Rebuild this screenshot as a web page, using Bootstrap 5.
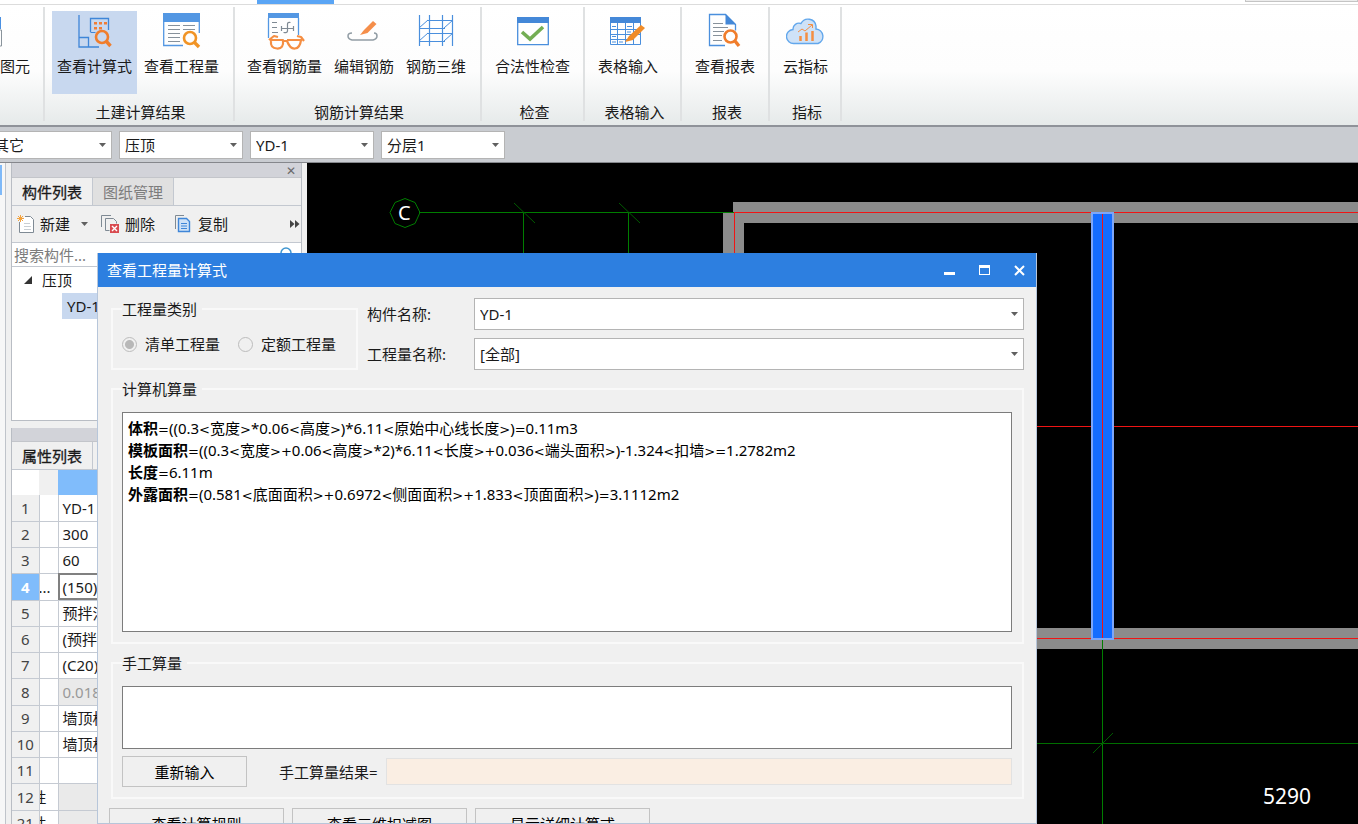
<!DOCTYPE html>
<html lang="zh-CN">
<head>
<meta charset="utf-8">
<meta name="viewport" content="width=device-width, initial-scale=1">
<title>查看工程量计算式</title>
<link href="https://cdn.jsdelivr.net/npm/bootstrap@5.3.0/dist/css/bootstrap.min.css" rel="stylesheet">
<style>
  body { font: 15px/20px "Noto Sans", "Noto Sans CJK SC", sans-serif; color: #1a1a1a; background: #f0f0f0; }
  svg { display: block; flex: none; }

  /* ribbon */
  .ribbon-tabs { height: 5px; flex: none; border-bottom: 1px solid #dcdcdc; background: #fff; }
  .active-tab { width: 77px; height: 4px; margin-left: 257px; background: #5aa5f5; }
  .corner-box { width: 113px; height: 2px; background: #ececec; border: 1px solid #c4c4c4; border-top: 0; }
  .ribbon { height: 120px; flex: none; background: linear-gradient(#fff 0%, #fdfdfd 55%, #e6eaea 100%); overflow: hidden; }
  .ribbon-group { padding: 6px 0 0 8px; margin: 0; position: relative; flex: none; }
  .ribbon-group::after { content: ""; position: absolute; right: 0; top: 2px; bottom: 4px; width: 2px; background: #dfe1e2; }
  .ribbon-group .tools { gap: 2px; }
  .ribbon-group .tool { width: 85px; height: 83px; padding: 1px 0 0; border: 0; border-radius: 0; font-size: 15px; line-height: 20px; color: #1a1a1a; display: flex; flex-direction: column; align-items: center; white-space: nowrap; gap: 4px; }
  .ribbon-group .tool.w4 { width: 70px; }
  .ribbon-group .tool.w3 { width: 55px; }
  .ribbon-group .tool.active { background: #c8d8ef; }
  .group-title { margin: 8px 0 0 -6px; text-align: center; }
  .g-pick { width: 45px; padding-left: 0; }
  .g-pick .tool { width: 30px !important; overflow: hidden; align-items: flex-start !important; }
  .g-civil { width: 190px; padding-left: 7px; } .g-rebar { width: 247px; padding-left: 7px; } .g-check { width: 103px; }
  .g-table { width: 97px; } .g-report { width: 88px; } .g-index { width: 72px; }

  /* drop-downs */
  .combo { border: 1px solid #b4b4b4; border-radius: 0; font-size: 15px; line-height: 20px; color: #1a1a1a; padding: 0 20px 0 5px; height: 28px; background: #fff url("data:image/svg+xml,%3Csvg xmlns='http://www.w3.org/2000/svg' width='7' height='4'%3E%3Cpath d='M0 0h7L3.500 4z' fill='%23606060'/%3E%3C/svg%3E") no-repeat right 5px center / 7px 4px; }
  .context-bar { height: 38px; flex: none; background: #c9ccd1; border-top: 2px solid #8f9299; border-bottom: 1px solid #85878c; padding-top: 4px; overflow: hidden; gap: 7px; }
  .context-bar .combo { width: 124px; flex: none; }
  .context-bar .combo:first-child { margin-left: -12px; }

  /* docks */
  .workspace { min-height: 0; overflow: hidden; }
  .side-strip { width: 6px; border-right: 1px solid #c0c4ca; background: #f7f7f7; }
  .side-strip span { display: block; width: 2px; height: 30px; background: #7fb9f8; margin-top: 2px; }
  .docks { width: 291px; margin: 0 5px; overflow: hidden; }
  .dock { border: 1px solid #b9bdc4; border-top: 0; background: #fff; }
  .dock-head { height: 15px; background: #d2d3d9; border-bottom: 1px solid #c3c5ca; }
  .dock-head .closer { font: 12px/12px "DejaVu Sans", sans-serif; border: 0; padding: 2px 5px 0; background: none; color: #6a6a6a; }
  .dock-tabs { height: 28px; background: #f0f0f0; border-bottom: 1px solid #c3c8d0; }
  .dock-tabs button { border: 0; border-right: 1px solid #c3c8d0; background: #f0f0f0; color: #1a1a1a; width: 81px; padding: 0; }
  .dock-tabs .idle { background: #e0e0e0; color: #7c7c7c; }
  .dock-tabs .on { -webkit-text-stroke: .3px; }
  .dock-tools { height: 37px; background: #f0f0f0; border-bottom: 1px solid #c3c8d0; padding: 0 1px 0 5px; }
  .dock-tools button { border: 0; background: none; padding: 0; display: flex; align-items: center; gap: 6px; color: #1a1a1a; }
  .dock-tools .act-del { margin: 0 20px 0 12px; }
  .finder { height: 24px; border-bottom: 1px solid #c3c8d0; }
  .finder input { border: 0; padding: 0 2px; font-size: 15px; line-height: 20px; border-radius: 0; height: 23px; }
  .finder input::placeholder { color: #7c7c7c; }
  .tree { height: 153px; }
  .tree li { height: 26px; line-height: 26px; }
  .tree .picked { background: #c8d8ef; margin-left: 50px; padding-left: 5px; }
  .props { margin-top: 7px; }
  .props .dock-head { height: 14px; }
  .grid { width: 100%; table-layout: fixed; border-collapse: collapse; }
  .grid th, .grid td { height: 26px; padding: 0 4px; border: 1px solid #c5cad2; border-width: 0 1px 1px 0; white-space: nowrap; overflow: hidden; font-weight: 400; }
  .grid tr:nth-child(4n) > * { height: 27px; }
  .grid tbody th { background: #f0f0f0; text-align: center; padding: 0; color: #444; }
  .grid thead th { border: 0; height: 25px; }
  .grid thead th:nth-child(2) { background: #f0f0f0; }
  .grid thead th:nth-child(3) { background: #80bcfb; }
  .grid .num { width: 27px; } .grid .flag { width: 19px; }
  .grid td:nth-child(2) { padding: 0; text-indent: -1px; }
  .grid td.cut { text-indent: -8px; }
  .grid .now th { background: #80bcfb; color: #fff; font-weight: 700; }
  .grid .now td:last-child { outline: 2px solid #808080; outline-offset: -2px; }
  .grid .off { background: #eaeaea; color: #999; }

  /* drawing canvas */
  .canvas { background: #000; min-width: 0; }
  .canvas text { fill: #fff; font-family: "Noto Sans", sans-serif; }

  /* floating window */
  .calc { position: absolute; left: 97px; top: 253px; bottom: 0; width: 940px; max-width: calc(100% - 97px); background: #f0f0f0; border: 1px solid #b7c6da; border-top: 0; overflow: hidden; }
  .calc-title { height: 34px; margin: 0 -1px; padding: 0 12px 0 10px; background: #2d7fe0; color: #fff; }
  .calc-title button { border: 0; background: none; padding: 0; }
  .calc-body { padding: 11px 12px 0 13px; }
  .calc .frame { border: 2px solid #f9f9f9; padding: 0 10px 10px 9px; min-width: 0; margin: 0; }
  .calc .frame + .frame, .calc .d-flex + .frame { margin-top: 8px; }
  .calc legend { float: none; width: auto; font-size: 15px; line-height: 22px; margin: 0; padding: 0 5px 0 0; color: #1a1a1a; }
  .kinds { width: 247px; height: 72px; flex: none; }
  .kinds .choices { display: flex; gap: 18px; padding-top: 14px; }
  .kinds .choice { display: flex; align-items: center; gap: 8px; white-space: nowrap; }
  .kinds .form-check-input { width: 15px; height: 15px; margin: 0; border: 1px solid #bcbcbc; background: #f0f0f0; opacity: 1; }
  .kinds .form-check-input:checked { background: radial-gradient(circle, #b8b8b8 0 4px, #f0f0f0 5px); }
  .kinds label { opacity: 1 !important; color: #1a1a1a; }
  .pickers { display: grid; grid-template-columns: 107px 1fr; row-gap: 8px; align-items: center; padding-left: 9px; }
  .pickers .combo { height: 32px; width: 100%; }
  .sheet { border: 1px solid #7c7c7c; border-radius: 0; background: #fff; margin-top: 12px; width: 100%; display: block; resize: none; }
  .manual { height: 63px; }
  .formulas { height: 220px; padding: 5px; line-height: 21px; color: #000; white-space: nowrap; overflow: hidden; }
  .formulas b { font-weight: 700; }
  .formulas i { font: 13px/20px "DejaVu Sans", sans-serif; }
  .manual-row { margin-top: 7px; }
  .push { border: 1px solid #c3c3c3; border-radius: 0; background: #f0f0f0; height: 31px; padding: 0; font-size: 15px; color: #000; line-height: 20px; width: 125px; }
  .push.more { width: 175px; }
  .more-row { margin: 9px 0 0 -2px; gap: 8px; }
  .result { background: #faeee3; border: 1px solid #e2e2e2; height: 27px; border-radius: 0; }
</style>
</head>
<body class="vh-100 overflow-hidden d-flex flex-column position-relative">

<div class="ribbon-tabs d-flex justify-content-between"><div class="active-tab"></div><div class="corner-box"></div></div>

<div class="ribbon d-flex" role="toolbar" aria-label="工程量">
  <section class="ribbon-group g-pick">
    <button class="btn tool"><svg width="30" height="40"><path d="M0 5h1v12H0z" fill="#4a90e2"/><path d="M0 18h1.500v16H0" fill="none" stroke="#8a949c"/></svg>图元</button>
  </section>
  <section class="ribbon-group g-civil">
    <div class="tools d-flex">
      <button class="btn tool active"><svg width="40" height="40" fill="none"><path d="M4 3v32h20M4 25.500h9.500V35M15.500 20V6.500h18V18" stroke="#3f86d8" stroke-width="1.300"/><path d="M15.500 20.500h5" stroke="#3f86d8"/><path d="M19 10h3v2.500h-3zM24 10h3v2.500h-3zM29 10h3v2.500h-3zM19 15h3v2.500h-3zM24 15h3v2.500h-3z" fill="#f07d36"/><circle cx="27" cy="25" r="6" stroke="#f07d2c" stroke-width="2.600"/><path d="m31 29 4.500 5" stroke="#f07d2c" stroke-width="3.400"/></svg>查看计算式</button>
      <button class="btn tool"><svg width="40" height="40" fill="none"><path d="M1 1h37v9H1z" fill="#5397e3"/><path d="M1.700 9v24.500H21M37.300 9v12" stroke="#5397e3" stroke-width="1.300"/><path d="M6 13.500h12M6 17.500h12M6 21.500h12M6 25.500h12M6 29.500h12M21 13.500h12M21 17.500h12" stroke="#87919b"/><circle cx="28" cy="26" r="6" stroke="#f19426" stroke-width="2.600"/><path d="m32 30 5 5" stroke="#f19426" stroke-width="3.400"/></svg>查看工程量</button>
    </div>
    <div class="group-title">土建计算结果</div>
  </section>
  <section class="ribbon-group g-rebar">
    <div class="tools d-flex">
      <button class="btn tool"><svg width="40" height="40" fill="none"><path d="M3 1h31v5H3z" fill="#5397e3"/><path d="M3.500 6v20M33.500 6v17" stroke="#5397e3" stroke-width="1.300"/><path d="M7 10.500h5M7 15.500h5M7 20.500h6M16 16.500h13M28.500 14v5M22.500 16v-4q0-2 3-1.500M22.500 16v3q0 2-4 1.500M16.500 14v5" stroke="#7f8a94" stroke-width="1.200"/><path d="M4 28 9 24l4 1M32 24l4 1 3 4M5 28h13q1 9-6 8.500T6 29M22 28h14q-1 8-6 8.500T22 29M18 29h4" stroke="#f58e42" stroke-width="2.200" stroke-linejoin="round"/></svg>查看钢筋量</button>
      <button class="btn tool w4"><svg width="40" height="40" fill="none"><path d="M8 21q-4 0-4 3t4 4h21q4-1 4-4t-3-3" stroke="#929da5" stroke-width="1.500"/><path d="m20 18 9-9 3.500 3-9 9-7.500 2z" fill="#f58e4a"/></svg>编辑钢筋</button>
      <button class="btn tool w4"><svg width="40" height="40" fill="none" stroke="#4a8fdd"><path d="M3.500 3v31M13.500 3v31M26.500 3v31M36.500 3v31M11 8.500h26M3 16.500h26M11 21.500h26M3 29.500h26" stroke-width="1.200"/><path d="m3 16 9-8M28 16l9-8M3 29l9-8M28 29l9-8" stroke-width="1"/></svg>钢筋三维</button>
    </div>
    <div class="group-title">钢筋计算结果</div>
  </section>
  <section class="ribbon-group g-check">
    <button class="btn tool"><svg width="40" height="40" fill="none"><path d="M4.700 5.700h30.600v27H4.700z" fill="#fff" stroke="#4a8fdd" stroke-width="1.300"/><path d="M4 5h32v6H4z" fill="#4488d8"/><path d="m9 20 8 7 13-12" stroke="#74ae54" stroke-width="3.600"/></svg>合法性检查</button>
    <div class="group-title">检查</div>
  </section>
  <section class="ribbon-group g-table">
    <button class="btn tool w4"><svg width="40" height="40" fill="none"><path d="M2.500 5.500h30v27h-30zM2 17.500h30M2 22.500h30M2 27.500h22M9.500 11v22M17.500 11v22M25.500 11v22" stroke="#4a8fdd"/><path d="M2 5h31v6H2z" fill="#4488d8"/><path d="M4 14.500h4M19 14.500h5M4 24.500h4M4 30h4M11 30h4M19 20h4" stroke="#4a8fdd"/><path d="m21 24 12-11 4 3-12 12-8 2z" fill="#f08c28"/></svg>表格输入</button>
    <div class="group-title">表格输入</div>
  </section>
  <section class="ribbon-group g-report">
    <button class="btn tool w4"><svg width="40" height="40" fill="none"><path d="M20 33.500H4.500v-31h16l10 10v6" stroke="#4a8fdd" stroke-width="1.300"/><path d="M20.500 2v10.500H31z" fill="#4488d8"/><path d="M8 11.500h10M8 15.500h15M8 19.500h11M8 23.500h9M8 28.500h9" stroke="#87919b"/><circle cx="25.500" cy="24.500" r="6" stroke="#f07d2c" stroke-width="2.600"/><path d="m30 29 4 5" stroke="#f07d2c" stroke-width="3.400"/></svg>查看报表</button>
    <div class="group-title">报表</div>
  </section>
  <section class="ribbon-group g-index">
    <button class="btn tool w3"><svg width="40" height="40" fill="none"><path d="M8 31.500a7 7 0 0 1-1-14 6 6 0 0 1 8-6 8 8 0 0 1 15 2.500v3a7.500 7.500 0 0 1 2 14.500z" fill="#cfe2f7" stroke="#62a7ec" stroke-width="1.400"/><path d="M14.500 24v5M20.500 20.500V29M26.500 19v10" stroke="#f58e42" stroke-width="2.500"/><path d="m12 20 4-3 3 2 7-6M22 12.500h4.500V16" stroke="#f58e42"/></svg>云指标</button>
    <div class="group-title">指标</div>
  </section>
</div>

<div class="context-bar d-flex">
  <select class="combo form-select" aria-label="构件类别"><option>其它</option></select>
  <select class="combo form-select" aria-label="构件类型"><option>压顶</option></select>
  <select class="combo form-select" aria-label="构件"><option>YD-1</option></select>
  <select class="combo form-select" aria-label="分层"><option>分层1</option></select>
</div>

<main class="workspace d-flex flex-fill">
  <div class="side-strip"><span></span></div>
  <div class="docks flex-shrink-0">
    <section class="dock">
      <div class="dock-head d-flex justify-content-end"><button class="closer" aria-label="关闭">✕</button></div>
      <div class="dock-tabs d-flex"><button class="on">构件列表</button><button class="idle">图纸管理</button></div>
      <div class="dock-tools d-flex align-items-center justify-content-between">
        <div class="d-flex align-items-center">
          <button><svg width="17" height="18" fill="none"><path d="M2.500 7v10.500h14V4.500l-3-3H8" fill="#fff" stroke="#7f8a94"/><path d="M7 8.500h6M7 11.500h7M7 14.500h7" stroke="#c9ced3"/><path d="M3.500 0v7M0 3.500h7M1 1l5 5M6 1 1 6" stroke="#f4a23c"/></svg>新建<svg width="9" height="5" class="ms-1"><path d="M1 0h7L4.500 4z" fill="#606060"/></svg></button>
          <button class="act-del"><svg width="18" height="18" fill="none"><path d="M.5 12V.5H10M4.500 15.500h4M4.500 15.500v-12h8l3 3v2" stroke="#7f8a94"/><path d="M9 9h9v9H9z" fill="#d94b50"/><path d="m11 11 5 5M16 11l-5 5" stroke="#fff" stroke-width="1.400"/></svg>删除</button>
          <button><svg width="17" height="18" fill="none"><path d="M.5 14V.5H9" stroke="#7f8a94"/><path d="M3.500 3.500h8l3 3v10h-11z" fill="#cfe2f7" stroke="#3f86d8" stroke-width="1.400"/><path d="M6 8.500h6M6 11h6M6 13.500h6" stroke="#3f86d8"/></svg>复制</button>
        </div>
        <button aria-label="更多"><svg width="10" height="8"><path d="m0 0 4.500 4L0 8zM5 0l4.500 4L5 8z" fill="#444"/></svg></button>
      </div>
      <div class="finder d-flex"><input class="form-control shadow-none" placeholder="搜索构件..." aria-label="搜索构件"><svg width="24" height="20" fill="none"><circle cx="9" cy="10" r="5" stroke="#3f95d0" stroke-width="1.500"/></svg></div>
      <ul class="tree list-unstyled mb-0">
        <li class="d-flex align-items-center"><svg width="30" height="10"><path d="M20 1v8h-8z" fill="#333"/></svg>压顶</li>
        <li class="picked">YD-1</li>
      </ul>
    </section>
    <section class="dock props">
      <div class="dock-head"></div>
      <div class="dock-tabs d-flex"><button class="on">属性列表</button></div>
      <table class="grid">
        <colgroup><col class="num"><col class="flag"><col></colgroup>
        <thead><tr><th></th><th></th><th></th></tr></thead>
        <tbody>
          <tr><th>1</th><td></td><td>YD-1</td></tr>
          <tr><th>2</th><td></td><td>300</td></tr>
          <tr><th>3</th><td></td><td>60</td></tr>
          <tr class="now"><th>4</th><td>...</td><td>(150)</td></tr>
          <tr><th>5</th><td></td><td>预拌混凝土</td></tr>
          <tr><th>6</th><td></td><td>(预拌混凝土)</td></tr>
          <tr><th>7</th><td></td><td>(C20)</td></tr>
          <tr><th>8</th><td></td><td class="off">0.018</td></tr>
          <tr><th>9</th><td></td><td>墙顶标高</td></tr>
          <tr><th>10</th><td></td><td>墙顶标高</td></tr>
          <tr><th>11</th><td></td><td></td></tr>
          <tr><th>12</th><td class="cut">性</td><td class="off"></td></tr>
          <tr><th>21</th><td class="cut">性</td><td class="off"></td></tr>
        </tbody>
      </table>
    </section>
  </div>

  <div class="canvas flex-fill">
    <svg width="100%" height="100%" fill="none" role="img" aria-label="平面图">
      <g fill="#8b8b8b"><rect x="426" y="39" width="100%" height="21"/><rect x="416" y="50" width="21" height="437"/><rect x="416" y="465" width="100%" height="21"/></g>
      <rect x="437" y="60" width="100%" height="405" fill="#000"/>
      <g fill="#007d00"><rect x="112" y="49" width="315" height="1"/><rect x="216" y="49" width="1" height="300"/><rect x="321" y="49" width="1" height="300"/></g>
      <path d="m207 40 21 20M312 40l21 20" stroke="#005a00"/>
      <path d="m98 35.500 10 4 5 10-5 11-10 4-10-4-5-11 5-10z" stroke="#007d00"/>
      <text x="91" y="57" font-size="20">C</text>
      <g fill="#f01414"><rect x="427" y="49" width="100%" height="1"/><rect x="427" y="49" width="1" height="426"/><rect x="427" y="475" width="100%" height="1"/><rect x="427" y="263" width="100%" height="1"/></g>
      <rect x="0" y="580" width="100%" height="1" fill="#006e00"/>
      <rect x="785" y="50" width="21" height="426" fill="#146cff" stroke="#7ea6f8" stroke-width="2"/>
      <rect x="795" y="51" width="1" height="424" fill="#f01414"/>
      <rect x="795" y="477" width="1" height="100%" fill="#007d00"/><path d="m786 590 20-20" stroke="#005a00"/>
      <text x="956" y="641" font-size="21">5290</text>
    </svg>
  </div>
</main>

<div class="calc" role="dialog" aria-labelledby="calc-name">
  <div class="calc-title d-flex align-items-center justify-content-between">
    <span id="calc-name">查看工程量计算式</span>
    <div class="d-flex gap-4">
      <button aria-label="最小化"><svg width="11" height="12"><path d="M0 8h11v3H0z" fill="#fff"/></svg></button>
      <button aria-label="最大化"><svg width="11" height="12"><path d="M0 1h11v10H0zM1 4v6h9V4z" fill="#fff" fill-rule="evenodd"/></svg></button>
      <button aria-label="关闭"><svg width="11" height="12"><path d="m1 2 9 9M10 2l-9 9" stroke="#fff" stroke-width="2"/></svg></button>
    </div>
  </div>
  <div class="calc-body">
    <div class="d-flex">
      <fieldset class="frame kinds">
        <legend>工程量类别</legend>
        <div class="choices">
          <div class="choice"><input class="form-check-input" type="radio" name="kind" id="k1" checked disabled><label for="k1">清单工程量</label></div>
          <div class="choice"><input class="form-check-input" type="radio" name="kind" id="k2" disabled><label for="k2">定额工程量</label></div>
        </div>
      </fieldset>
      <div class="pickers flex-fill">
        <label for="part">构件名称:</label><select class="combo form-select" id="part"><option>YD-1</option></select>
        <label for="qty">工程量名称:</label><select class="combo form-select" id="qty"><option>[全部]</option></select>
      </div>
    </div>
    <fieldset class="frame">
      <legend>计算机算量</legend>
      <div class="sheet formulas" role="textbox" aria-readonly="true" tabindex="0">
        <div><b>体积</b><i>=</i>((0.3<i>&lt;</i>宽度<i>&gt;</i>*0.06<i>&lt;</i>高度<i>&gt;</i>)*6.11<i>&lt;</i>原始中心线长度<i>&gt;</i>)<i>=</i>0.11m3</div>
        <div><b>模板面积</b><i>=</i>((0.3<i>&lt;</i>宽度<i>&gt;+</i>0.06<i>&lt;</i>高度<i>&gt;</i>*2)*6.11<i>&lt;</i>长度<i>&gt;+</i>0.036<i>&lt;</i>端头面积<i>&gt;</i>)-1.324<i>&lt;</i>扣墙<i>&gt;=</i>1.2782m2</div>
        <div><b>长度</b><i>=</i>6.11m</div>
        <div><b>外露面积</b><i>=</i>(0.581<i>&lt;</i>底面面积<i>&gt;+</i>0.6972<i>&lt;</i>侧面面积<i>&gt;+</i>1.833<i>&lt;</i>顶面面积<i>&gt;</i>)<i>=</i>3.1112m2</div>
      </div>
    </fieldset>
    <fieldset class="frame">
      <legend>手工算量</legend>
      <textarea class="sheet manual" aria-label="手工算量"></textarea>
      <div class="manual-row d-flex align-items-center">
        <button class="btn push">重新输入</button>
        <label for="res" class="ms-4 ps-2 pe-2">手工算量结果=</label>
        <input id="res" class="result flex-fill" readonly>
      </div>
    </fieldset>
    <div class="more-row d-flex">
      <button class="btn push more">查看计算规则</button><button class="btn push more">查看三维扣减图</button><button class="btn push more">显示详细计算式</button>
    </div>
  </div>
</div>

<script src="https://cdn.jsdelivr.net/npm/bootstrap@5.3.0/dist/js/bootstrap.bundle.min.js"></script>
</body>
</html>
